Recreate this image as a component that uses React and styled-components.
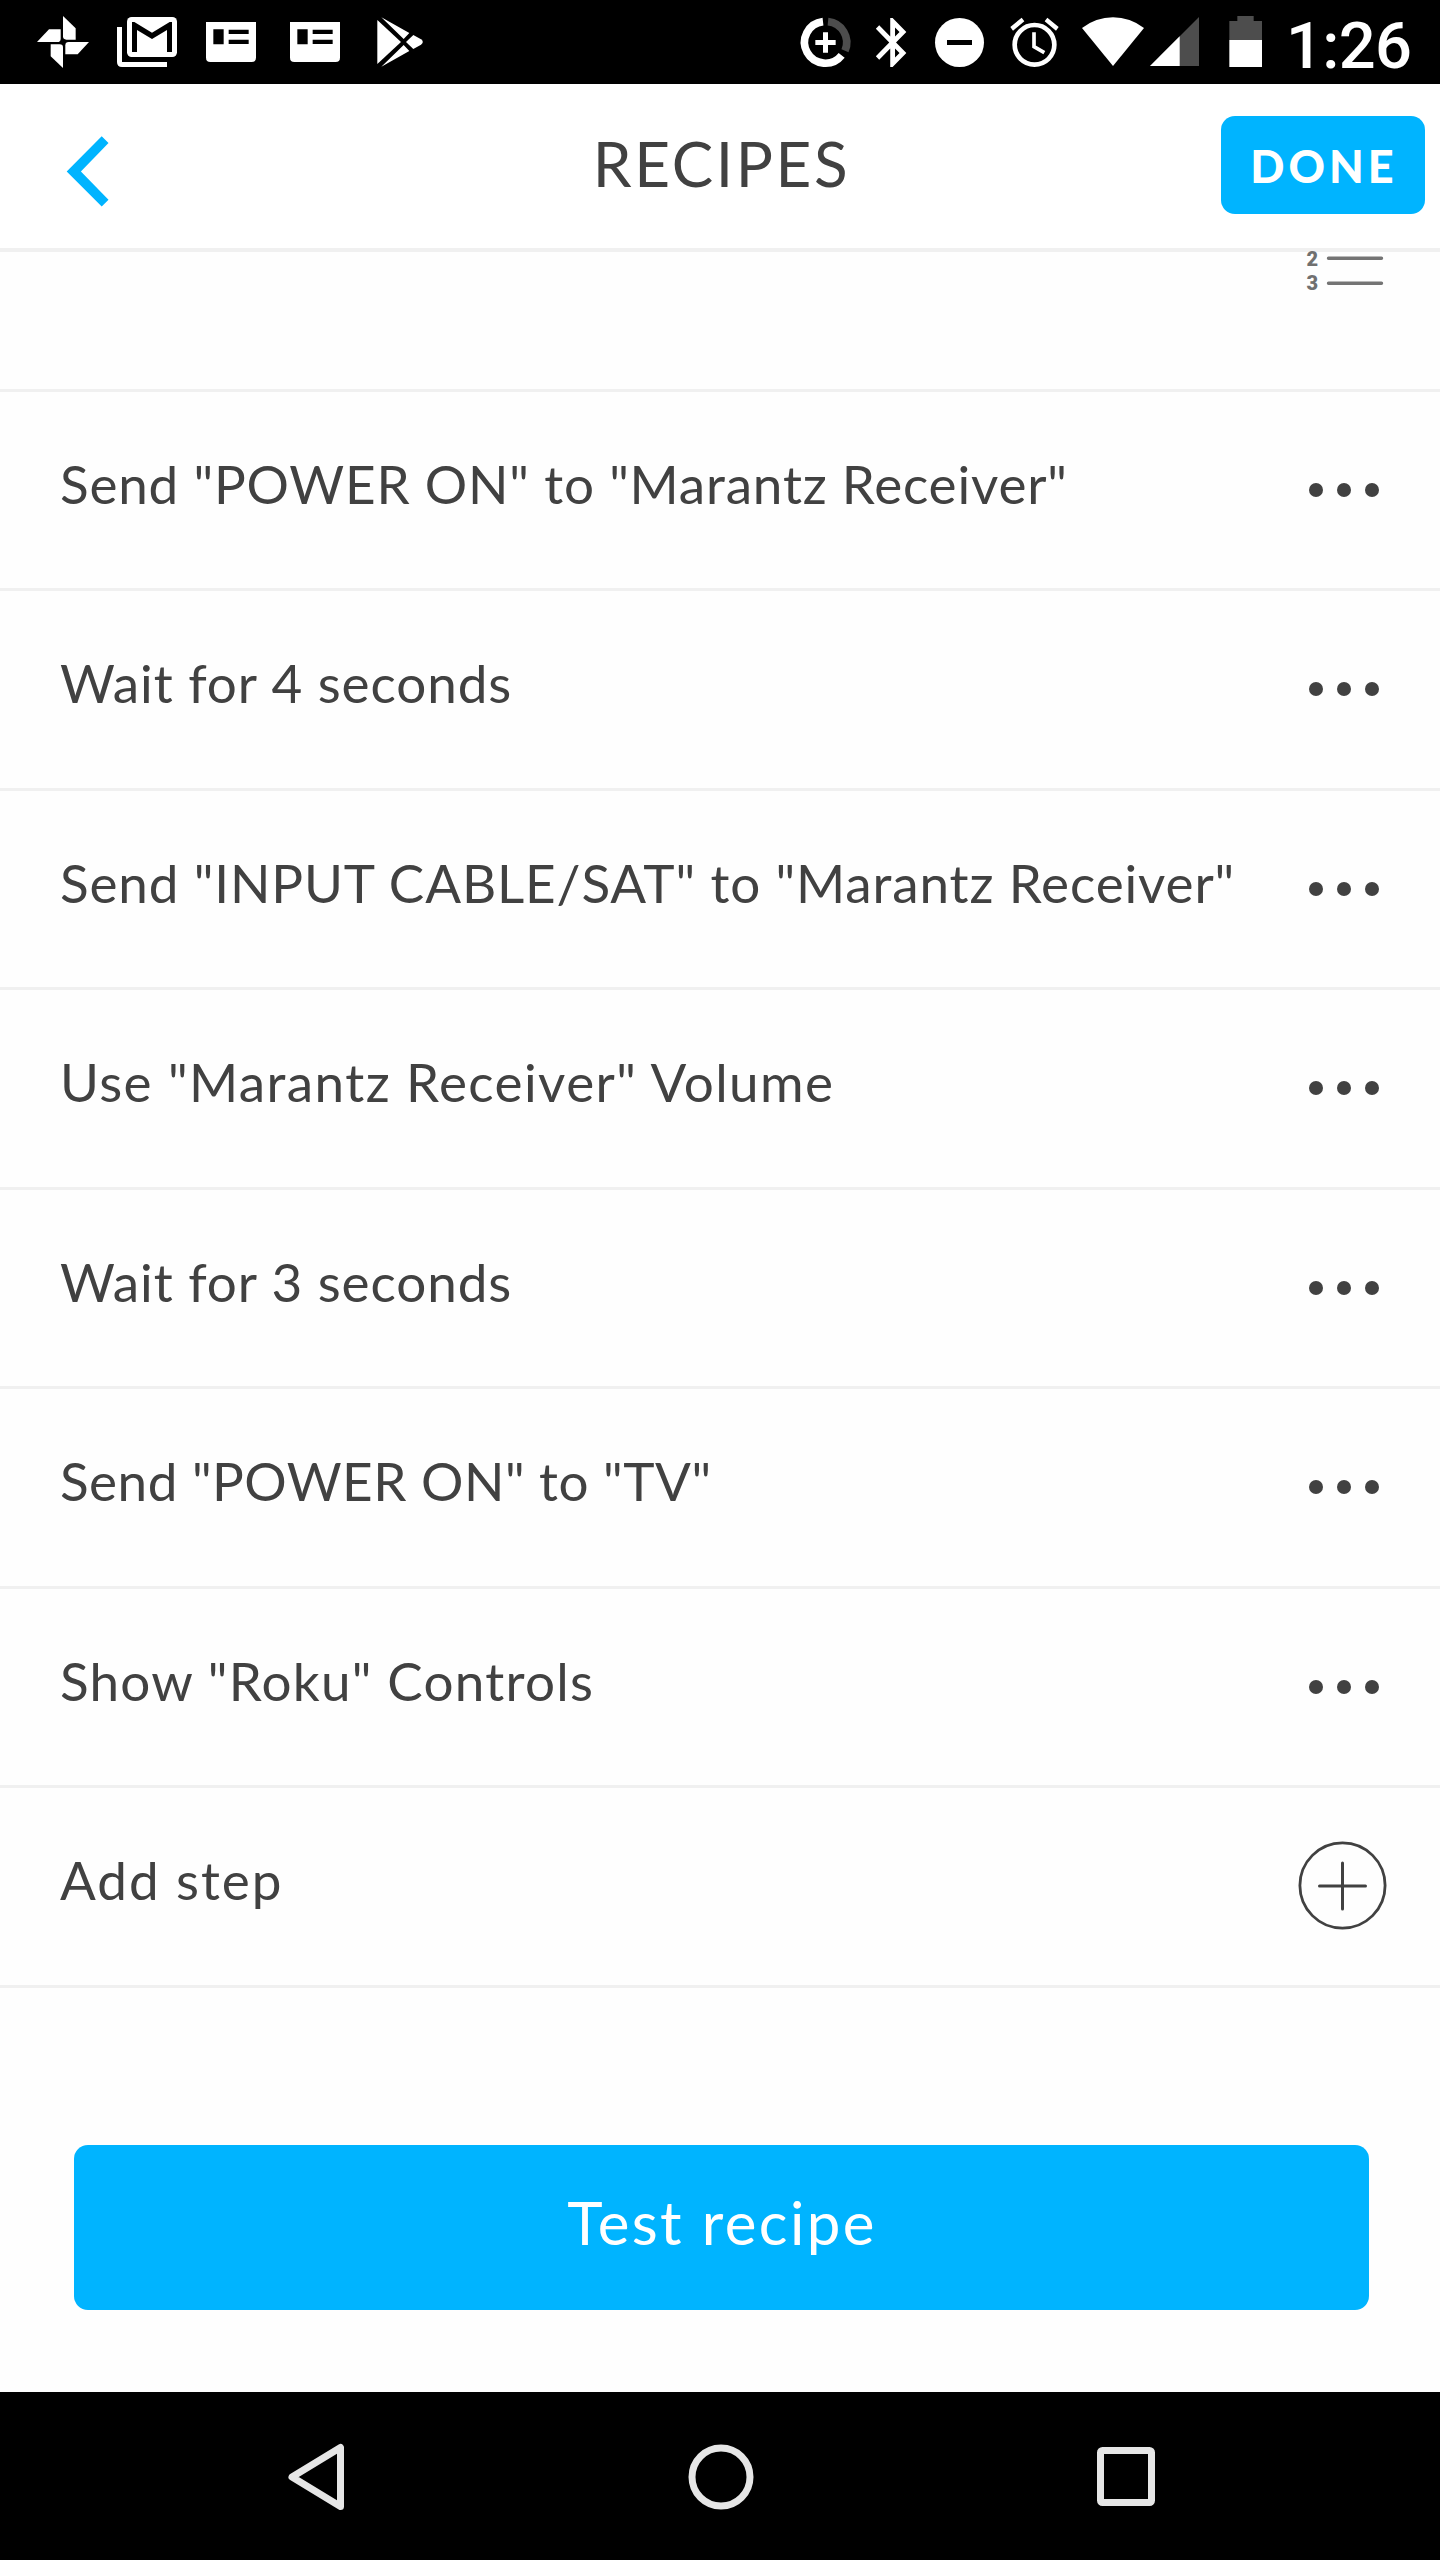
import React from "react";
import styled, { createGlobalStyle } from "styled-components";

const BLUE = "#00b4ff";
const TEXT = "#414141";
const LINE = "#f0f0f0";
const DIM = "#4d4d4d";

const GlobalStyle = createGlobalStyle`
  * {
    box-sizing: border-box;
  }
  body {
    margin: 0;
    background: #fefefe;
    font-family: Lato, "Open Sans", sans-serif;
    color: ${TEXT};
  }
  button {
    border: 0;
    padding: 0;
    background: none;
    font: inherit;
    color: inherit;
  }
  svg {
    display: block;
    flex: none;
    overflow: visible;
  }
`;

// Styled Components
const Screen = styled.div`
  width: 1440px;
  height: 2560px;
  display: flex;
  flex-direction: column;
  overflow: hidden;
`;

const StatusBar = styled.div`
  height: 84px;
  flex: none;
  display: flex;
  justify-content: space-between;
  padding: 0 28px 0 21px;
  background: #000;
`;

const StatusGroup = styled.div`
  display: flex;
`;

const Clock = styled.div`
  width: 132px;
  padding-left: 6px;
  font: 500 65px/92px Roboto, sans-serif;
  letter-spacing: ${props => props.spacing}px;
  color: #fff;
  white-space: nowrap;
`;

const Header = styled.header`
  height: 168px;
  flex: none;
  display: grid;
  grid-template-columns: 240px 1fr 240px;
  border-bottom: 4px solid ${LINE};
  background: #fff;
`;

const BackButton = styled.button`
  justify-self: start;
  align-self: start;
  padding: 50px 0 0 64px;
`;

const Title = styled.h1`
  margin: 0;
  padding-left: 3px;
  text-align: center;
  font-size: 62px;
  font-weight: 400;
  line-height: 158px;
  letter-spacing: ${props => props.spacing}px;
`;

const DoneButton = styled.button`
  justify-self: end;
  width: 204px;
  height: 98px;
  margin: 31.5px 15px 0 0;
  padding-left: 2px;
  border-radius: 14px;
  background: ${BLUE};
  color: #fff;
  font-size: 45px;
  font-weight: 900;
  line-height: 100px;
  letter-spacing: ${props => props.spacing}px;
`;

const Steps = styled.div`
  flex: none;
  display: flex;
  flex-direction: column;
`;

// Row scrolled halfway under the header
const ReorderRow = styled.div`
  height: 136.5px;
  padding-right: 54px;
  display: flex;
  justify-content: flex-end;
`;

const Row = styled.div`
  height: 199.5px;
  padding: 0 52px 0 60px;
  display: flex;
  justify-content: space-between;
  align-items: center;
  border-top: 3px solid ${LINE};
`;

const Label = styled.span`
  align-self: flex-start;
  font-size: 53px;
  line-height: 184px;
  letter-spacing: ${props => props.spacing}px;
  white-space: pre;
`;

const Footer = styled.div`
  flex: 1;
  padding: 157.5px 71.5px 0 73.5px;
  border-top: 3px solid ${LINE};
`;

const TestButton = styled.button`
  display: block;
  width: 100%;
  height: 165px;
  border-radius: 14px;
  background: ${BLUE};
  color: #fff;
  font-size: 60px;
  line-height: 152px;
  padding: 0 0 12px 2px;
  letter-spacing: ${props => props.spacing}px;
`;

const NavBar = styled.nav`
  height: 168px;
  flex: none;
  display: flex;
  justify-content: center;
  padding: 1px 0 0 1px;
  background: #000;
`;

const NavItem = styled.div`
  width: 405px;
  display: flex;
  justify-content: center;
  align-items: center;
`;

// Status glyphs are drawn on a grid of thirds of a pixel
const Glyph = ({ x, w, children }) => (
  <svg width={w} height="84" viewBox={`${x * 3} 0 ${w * 3} 252`} fill="#fff">
    {children}
  </svg>
);

const PhotosIcon = () => (
  <Glyph x={21} w={84}>
    <path d="M189 48l38 37v34h-28q-10 0-10-10z" />
    <path d="M111 126l36-38h35v28q0 10-10 10z" />
    <path d="M189 204l-37-35v-36h27q10 0 10 10z" />
    <path d="M267 126l-34 37h-37v-27q0-10 10-10z" />
  </Glyph>
);

const GmailIcon = () => (
  <Glyph x={105} w={84}>
    <path d="M351 81h15v105h135v15H366q-15 0-15-15z" />
    <rect x="381" y="51" width="150" height="120" rx="14" />
    <path
      d="M396 66h7l53 32 53-32h7v90h-15V90l-45 27-45-27v66h-15z"
      fill="#000"
    />
  </Glyph>
);

const CardIcon = () => (
  <Glyph x={189} w={84}>
    <path d="M618 66h150v107q0 13-13 13H631q-13 0-13-13z" />
    <path d="M640 88h31v45h-31zM686 89h60v13h-60zM686 119h60v13h-60z" fill="#000" />
  </Glyph>
);

const PlayIcon = () => (
  <Glyph x={357} w={84}>
    <path d="M1132 60l71 66-71 66z" />
    <path d="M1144 52l84 47-17 18zM1144 200l84-47-17-18z" />
    <path d="M1240 105l23 13q11 8 0 16l-23 13-22-21z" />
  </Glyph>
);

const DataSaverIcon = () => (
  <Glyph x={790} w={69}>
    <g transform="translate(2280 0)">
      <path d="M189 65A62.5 62.5 0 1 0 245 166" fill="none" stroke="#fff" strokeWidth="23" />
      <path d="M204 65A62.5 62.5 0 0 1 255 152" fill="none" stroke={DIM} strokeWidth="23" />
      <path d="M166 120h23V97h15v23h23v15h-23v23h-15v-23h-23z" />
    </g>
  </Glyph>
);

const BluetoothIcon = () => (
  <Glyph x={859} w={66}>
    <path
      transform="translate(2591.5 39.3) scale(7.2 7.35)"
      d="M17.71 7.71L12 2h-1v7.59L6.41 5 5 6.41 10.59 12 5 17.59 6.41 19 11 14.41V22h1l5.71-5.71-4.3-4.29 4.3-4.29zM13 5.83l1.88 1.88L13 9.59V5.83zm1.88 10.46L13 18.17v-3.76l1.88 1.88z"
    />
  </Glyph>
);

const DoNotDisturbIcon = () => (
  <Glyph x={925} w={72}>
    <circle cx="2878.5" cy="127.5" r="73.5" />
    <rect x="2841" y="120" width="75" height="15" fill="#000" />
  </Glyph>
);

const AlarmIcon = () => (
  <Glyph x={997} w={77}>
    <g transform="translate(2280 0)">
      <circle cx="823.5" cy="134.5" r="59.5" fill="none" stroke="#fff" strokeWidth="14" />
      <path d="M822 97v43l31 18" fill="none" stroke="#fff" strokeWidth="11" />
      <path d="M785 53l8 11-34 28-8-11zM862 53l-8 11 34 28 8-11z" />
    </g>
  </Glyph>
);

const WifiIcon = () => (
  <Glyph x={1074} w={73}>
    <path d="M3246 84A150 150 0 0 1 3432 84L3339 198z" />
  </Glyph>
);

const SignalIcon = () => (
  <Glyph x={1147} w={55}>
    <path d="M3450 198L3597 51v147z" fill={DIM} />
    <path d="M3450 198l89-89v89z" />
  </Glyph>
);

const BatteryIcon = () => (
  <Glyph x={1202} w={78}>
    <path d="M3688 120V63h24V48h49v15h25v57z" fill={DIM} />
    <path d="M3688 120h98v81h-98z" />
  </Glyph>
);

const ReorderIcon = () => (
  <svg width="80" height="42" viewBox="0 0 80 42">
    <g fill="#707070" fontFamily="Roboto" fontWeight="900" fontSize="20">
      <text x="0.5" y="14">2</text>
      <text x="0.5" y="38">3</text>
    </g>
    <path d="M22.5 6.3h53M22.5 31.3h53" stroke="#747474" strokeWidth="3.4" strokeLinecap="round" />
  </svg>
);

const DotsIcon = () => (
  <svg width="88" height="88" viewBox="0 0 88 88" fill={TEXT}>
    <circle cx="16" cy="44" r="7" />
    <circle cx="44" cy="44" r="7" />
    <circle cx="72" cy="44" r="7" />
  </svg>
);

const AddIcon = () => (
  <svg width="90" height="90" viewBox="0 0 90 90" fill="none" stroke={TEXT}>
    <circle cx="44.5" cy="44.5" r="42.6" strokeWidth="2.8" />
    <path d="M21.5 45h46M44.5 22v46" strokeWidth="3" strokeLinecap="round" />
  </svg>
);

const steps = [
  { label: 'Send "POWER ON" to "Marantz Receiver"', spacing: 0.82 },
  { label: "Wait for 4 seconds", spacing: 0.94 },
  { label: 'Send "INPUT CABLE/SAT" to "Marantz Receiver"', spacing: 0.87 },
  { label: 'Use "Marantz Receiver" Volume', spacing: 1.42 },
  { label: "Wait for 3 seconds", spacing: 0.94 },
  { label: 'Send "POWER ON" to "TV"', spacing: 0.5 },
  { label: 'Show "Roku" Controls', spacing: 1.24 }
];

function App() {
  return (
    <Screen>
      <GlobalStyle />
      <StatusBar>
        <StatusGroup>
          <PhotosIcon />
          <GmailIcon />
          <CardIcon />
          <CardIcon />
          <PlayIcon />
        </StatusGroup>
        <StatusGroup>
          <DataSaverIcon />
          <BluetoothIcon />
          <DoNotDisturbIcon />
          <AlarmIcon />
          <WifiIcon />
          <SignalIcon />
          <BatteryIcon />
          <Clock spacing={-0.7}>1:26</Clock>
        </StatusGroup>
      </StatusBar>
      <Header>
        <BackButton aria-label="Back">
          <svg width="48" height="76" viewBox="64 134 48 76" fill={BLUE}>
            <path d="M101.7 136.3l6.8 6.8-27.6 28.3 27.6 28.3-6.8 6.8-35-35.1z" />
          </svg>
        </BackButton>
        <Title spacing={2.6}>RECIPES</Title>
        <DoneButton spacing={4}>DONE</DoneButton>
      </Header>
      <Steps>
        <ReorderRow>
          <ReorderIcon />
        </ReorderRow>
        {steps.map((step, i) => (
          <Row key={i}>
            <Label spacing={step.spacing}>{step.label}</Label>
            <DotsIcon />
          </Row>
        ))}
        <Row>
          <Label spacing={1.95}>Add step</Label>
          <AddIcon />
        </Row>
      </Steps>
      <Footer>
        <TestButton spacing={2.4}>Test recipe</TestButton>
      </Footer>
      <NavBar>
        <NavItem>
          <svg width="66" height="70" viewBox="0 0 66 70" fill="none">
            <path
              d="M57.5 5.5v59L9 35z"
              stroke="#e6e6e6"
              strokeWidth="7"
              strokeLinejoin="round"
            />
          </svg>
        </NavItem>
        <NavItem>
          <svg width="66" height="66" viewBox="0 0 66 66" fill="none">
            <circle cx="33" cy="33" r="29" stroke="#e6e6e6" strokeWidth="7" />
          </svg>
        </NavItem>
        <NavItem>
          <svg width="58" height="59" viewBox="0 0 58 59" fill="none">
            <rect x="3.5" y="3.5" width="51" height="52" rx="2" stroke="#e6e6e6" strokeWidth="7" />
          </svg>
        </NavItem>
      </NavBar>
    </Screen>
  );
}

export default App;
